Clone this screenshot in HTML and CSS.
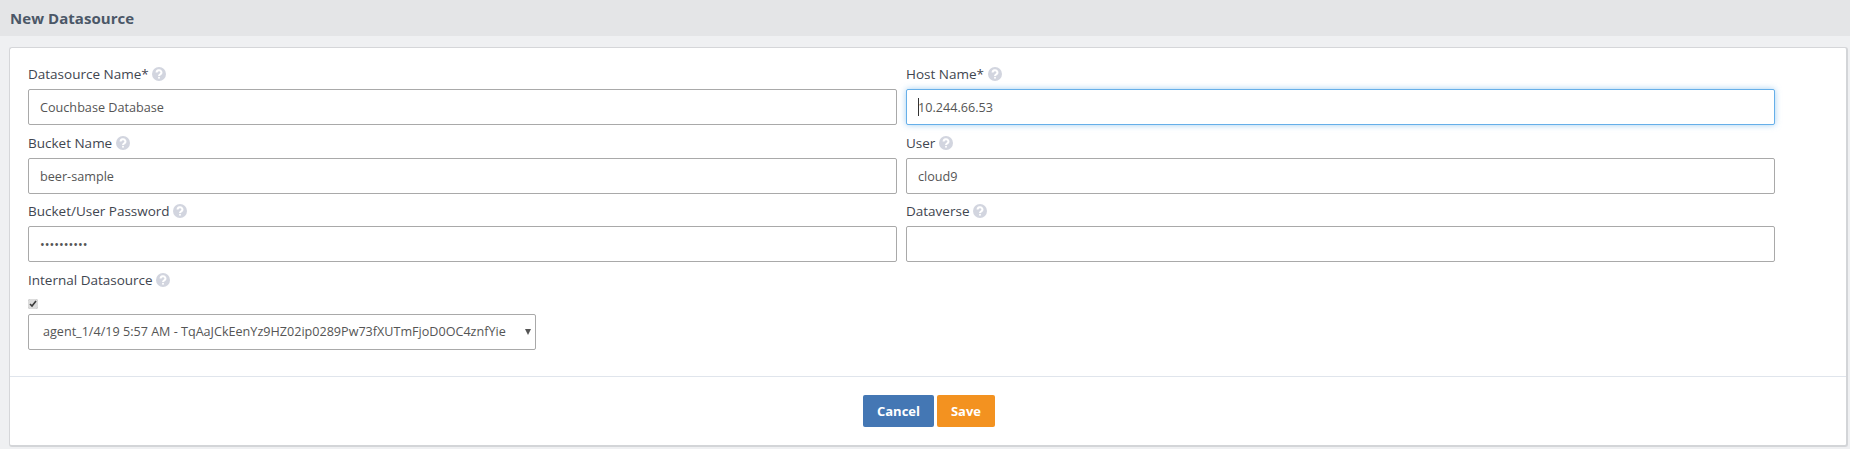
FILE: index.html
```html
<!DOCTYPE html>
<html lang="en">
<head>
<meta charset="utf-8">
<title>New Datasource</title>
<link rel="stylesheet" href="styles.css">
</head>
<body>
<header class="page-head"><h1>New Datasource</h1></header>
<main class="card">
  <form class="card-body">
    <div class="grid">
      <div class="field">
        <label class="label">Datasource Name* <svg class="help" viewBox="0 0 14 14"><circle cx="7" cy="7" r="7"/><path d="M4.6 5.4a2.4 2.2 0 1 1 3.6 1.9c-.8.5-1.2.9-1.2 1.7"/><circle class="dot" cx="7" cy="10.8" r="1"/></svg></label>
        <input class="input" type="text" value="Couchbase Database">
      </div>
      <div class="field">
        <label class="label">Host Name* <svg class="help" viewBox="0 0 14 14"><circle cx="7" cy="7" r="7"/><path d="M4.6 5.4a2.4 2.2 0 1 1 3.6 1.9c-.8.5-1.2.9-1.2 1.7"/><circle class="dot" cx="7" cy="10.8" r="1"/></svg></label>
        <div class="caret-wrap">
          <input class="input focused" type="text" value="10.244.66.53">
          <span class="caret"></span>
        </div>
      </div>
      <div class="field">
        <label class="label">Bucket Name <svg class="help" viewBox="0 0 14 14"><circle cx="7" cy="7" r="7"/><path d="M4.6 5.4a2.4 2.2 0 1 1 3.6 1.9c-.8.5-1.2.9-1.2 1.7"/><circle class="dot" cx="7" cy="10.8" r="1"/></svg></label>
        <input class="input" type="text" value="beer-sample">
      </div>
      <div class="field">
        <label class="label">User <svg class="help" viewBox="0 0 14 14"><circle cx="7" cy="7" r="7"/><path d="M4.6 5.4a2.4 2.2 0 1 1 3.6 1.9c-.8.5-1.2.9-1.2 1.7"/><circle class="dot" cx="7" cy="10.8" r="1"/></svg></label>
        <input class="input" type="text" value="cloud9">
      </div>
      <div class="field">
        <label class="label">Bucket/User Password <svg class="help" viewBox="0 0 14 14"><circle cx="7" cy="7" r="7"/><path d="M4.6 5.4a2.4 2.2 0 1 1 3.6 1.9c-.8.5-1.2.9-1.2 1.7"/><circle class="dot" cx="7" cy="10.8" r="1"/></svg></label>
        <input class="input pw" type="password" value="passwordxx">
      </div>
      <div class="field">
        <label class="label">Dataverse <svg class="help" viewBox="0 0 14 14"><circle cx="7" cy="7" r="7"/><path d="M4.6 5.4a2.4 2.2 0 1 1 3.6 1.9c-.8.5-1.2.9-1.2 1.7"/><circle class="dot" cx="7" cy="10.8" r="1"/></svg></label>
        <input class="input" type="text" value="">
      </div>
    </div>
    <div class="internal">
      <label class="label">Internal Datasource <svg class="help" viewBox="0 0 14 14"><circle cx="7" cy="7" r="7"/><path d="M4.6 5.4a2.4 2.2 0 1 1 3.6 1.9c-.8.5-1.2.9-1.2 1.7"/><circle class="dot" cx="7" cy="10.8" r="1"/></svg></label>
      <input class="check" type="checkbox" checked>
      <div class="select">
        <span class="select-text">agent_1/4/19 5:57 AM - TqAaJCkEenYz9HZ02ip0289Pw73fXUTmFjoD0OC4znfYie</span>
        <span class="select-arrow"></span>
      </div>
    </div>
  </form>
  <footer class="card-foot">
    <button class="btn btn-cancel" type="button">Cancel</button>
    <button class="btn btn-save" type="button">Save</button>
  </footer>
</main>
</body>
</html>
```
FILE: styles.css
```css
* { box-sizing: border-box; }
html, body { height: 100%; }
body {
  margin: 0;
  background: #eff0f2;
  font-family: "Open Sans", "Liberation Sans", sans-serif;
  font-size: 13.5px;
  color: #3f4650;
  overflow: hidden;
}
.page-head {
  height: 36px;
  background: #e4e5e7;
  display: flex;
  align-items: center;
  padding-left: 10px;
}
.page-head h1 {
  margin: 0;
  font-size: 15px;
  font-weight: 700;
  letter-spacing: .05px;
  color: #4b5767;
}
.card {
  margin: 11px 2px 0 9px;
  height: 400px;
  background: #fff;
  border: 1px solid #d5d6d9;
  border-bottom: 2px solid #d3d5d8;
  border-right: 2px solid #d3d5d8;
  border-radius: 3px;
  display: flex;
  flex-direction: column;
}
.card-body {
  height: 329px;
  padding: 11px 18px 0;
  border-bottom: 1px solid #e0e5ec;
}
.grid {
  display: grid;
  grid-template-columns: 869px 869px;
  column-gap: 9px;
}
.field { height: 68.5px; }
.label {
  display: block;
  height: 30px;
  line-height: 30px;
  font-size: 13.5px;
  color: #3f4650;
}
.help {
  width: 14px;
  height: 14px;
  vertical-align: -2px;
}
.help circle { fill: #d2d5df; }
.help path { fill: none; stroke: #fff; stroke-width: 2; }
.help .dot { fill: #fff; }
.input {
  display: block;
  width: 100%;
  height: 36px;
  padding: 0 11px;
  border: 1px solid #a9a9a9;
  border-radius: 2px;
  background: #fff;
  font: 12.65px "Open Sans", "Liberation Sans", sans-serif;
  color: #555;
  outline: none;
}
.input.focused {
  border-color: #66afe9;
  box-shadow: 0 0 6px rgba(102, 175, 233, .6);
}
.caret-wrap { position: relative; }
.caret {
  position: absolute;
  left: 12px;
  top: 9px;
  width: 1px;
  height: 18px;
  background: #333;
}
.check {
  display: block;
  width: 10px;
  height: 10px;
  margin: 4px 0 0;
  accent-color: #dcdcdc;
}
.select {
  margin-top: 5px;
  width: 508px;
  height: 36px;
  border: 1px solid #a9a9a9;
  border-radius: 2px;
  display: flex;
  align-items: center;
  justify-content: space-between;
  padding: 0 4px 0 14px;
  font-size: 12.6px;
  color: #555;
}
.select-text { white-space: nowrap; }
.select-arrow {
  width: 0;
  height: 0;
  border-left: 3.5px solid transparent;
  border-right: 3.5px solid transparent;
  border-top: 6px solid #555;
}
.card-foot {
  flex: 1;
  display: flex;
  justify-content: center;
  align-items: flex-start;
  gap: 3px;
  padding: 18px 0 0 2px;
}
.btn {
  height: 32px;
  border: 0;
  border-radius: 2px;
  color: #fff;
  font: 700 13px "Open Sans", "Liberation Sans", sans-serif;
  padding: 0;
}
.btn-cancel { width: 71px; background: #4477b4; }
.btn-save { width: 58px; background: #f39220; }
```
